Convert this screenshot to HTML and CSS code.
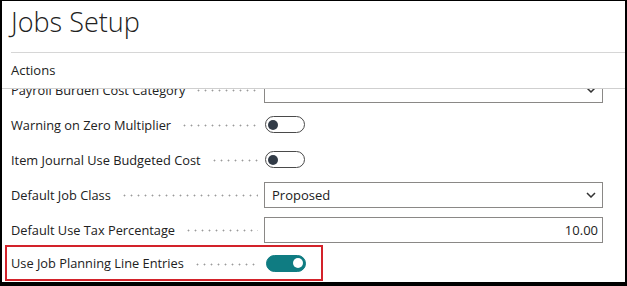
FILE: index.html
```html
<!DOCTYPE html>
<html lang="en">
<head>
    <meta charset="UTF-8">
    <meta name="viewport" content="width=device-width, initial-scale=1.0">
    <title>Jobs Setup</title>
    <link rel="stylesheet" href="styles.css">
</head>
<body>

<div class="frame">
    <header class="page-header">
        <h1 class="page-title">Jobs Setup</h1>
    </header>

    <div class="actions">Actions</div>

    <div class="fields">
        <!-- scrolled: first row sits partly under the action bar -->
        <div class="row first">
            <div class="label"><span>Payroll Burden Cost Category</span><span class="leader"></span></div>
            <div class="box select">
                <span></span>
                <svg class="chevron" width="10" height="6" viewBox="0 0 10 6"><path d="M1 1l4 4 4-4" fill="none" stroke="#333" stroke-width="1.5"/></svg>
            </div>
        </div>

        <div class="row">
            <div class="label"><span>Warning on Zero Multiplier</span><span class="leader"></span></div>
            <div class="toggle"><span class="toggle-knob"></span></div>
        </div>

        <div class="row">
            <div class="label"><span>Item Journal Use Budgeted Cost</span><span class="leader"></span></div>
            <div class="toggle"><span class="toggle-knob"></span></div>
        </div>

        <div class="row">
            <div class="label"><span>Default Job Class</span><span class="leader"></span></div>
            <div class="box select">
                <span>Proposed</span>
                <svg class="chevron" width="10" height="6" viewBox="0 0 10 6"><path d="M1 1l4 4 4-4" fill="none" stroke="#333" stroke-width="1.5"/></svg>
            </div>
        </div>

        <div class="row">
            <div class="label"><span>Default Use Tax Percentage</span><span class="leader"></span></div>
            <div class="box number">10.00</div>
        </div>

        <div class="row highlight">
            <div class="label"><span>Use Job Planning Line Entries</span><span class="leader"></span></div>
            <div class="toggle on"><span class="toggle-knob"></span></div>
        </div>
    </div>
</div>

</body>
</html>
```

FILE: styles.css
```css
body {
    margin: 0;
    background-color: #000;
    font-family: "Open Sans", "Noto Sans", sans-serif;
    color: #212121;
}
.frame {
    margin: 1px 2px 0 2px;
    height: 281px;
    background-color: #fff;
    overflow: hidden;
}
.page-header {
    height: 51px;
    margin-left: 9px;
    border-bottom: 1px solid #d6d6d6;
}
.page-title {
    margin: 0;
    padding-top: 4px;
    font-size: 27px;
    font-weight: 300;
    line-height: 34px;
}
.actions {
    height: 35px;
    line-height: 35px;
    padding-left: 9px;
    font-size: 13px;
    border-bottom: 1px solid #cfcfcf;
}
.fields {
    height: 193px;
    overflow: hidden;
}
.row {
    display: flex;
    align-items: center;
    height: 35px;
    padding-left: 9px;
}
.row.first {
    margin-top: -17px;
}
.row.highlight {
    box-sizing: border-box;
    width: 318px;
    height: 36px;
    margin-top: -2px;
    margin-left: 3px;
    padding-left: 4px;
    border: 2px solid #d3222a;
}
.label {
    display: flex;
    align-items: center;
    flex: none;
    width: 253px;
    font-size: 12.8px;
    white-space: nowrap;
}
.leader {
    flex: 1;
    height: 3px;
    margin: 2px 6px 0 10px;
    background-image: radial-gradient(circle, #9a9a9a 0.7px, transparent 1.2px);
    background-size: 7px 3px;
}
.box {
    box-sizing: border-box;
    display: flex;
    align-items: center;
    width: 339px;
    height: 26px;
    padding: 0 7px;
    border: 1px solid #8a8886;
    font-size: 13px;
}
.select {
    justify-content: space-between;
    padding-right: 6px;
}
.number {
    justify-content: flex-end;
    padding-right: 4px;
}
.toggle {
    box-sizing: border-box;
    display: flex;
    align-items: center;
    width: 40px;
    height: 17px;
    margin-left: 1px;
    padding: 0 2px;
    border: 1px solid #4a4a4a;
    border-radius: 9px;
}
.toggle-knob {
    width: 10px;
    height: 10px;
    border-radius: 50%;
    background-color: #323b47;
}
.toggle.on {
    justify-content: flex-end;
    margin-left: 2px;
    background-color: #0f7c82;
    border-color: #0f7c82;
}
.toggle.on .toggle-knob {
    background-color: #fff;
}
```
